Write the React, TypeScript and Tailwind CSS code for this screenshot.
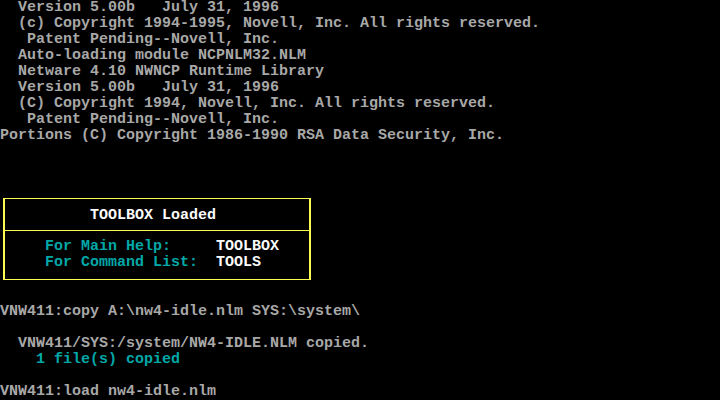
import React from "react";

const gray = "text-[#a8a8a8]";
const cyan = "text-[#00a8a8]";
const white = "text-[#fcfcfc]";

function Line({ text, color = gray }: { text: string; color?: string }) {
  return <div className={`h-[16px] whitespace-pre ${color}`}>{text || " "}</div>;
}

export default function App() {
  const top = [
    "  Version 5.00b   July 31, 1996",
    "  (c) Copyright 1994-1995, Novell, Inc. All rights reserved.",
    "   Patent Pending--Novell, Inc.",
    "  Auto-loading module NCPNLM32.NLM",
    "  Netware 4.10 NWNCP Runtime Library",
    "  Version 5.00b   July 31, 1996",
    "  (C) Copyright 1994, Novell, Inc. All rights reserved.",
    "   Patent Pending--Novell, Inc.",
    "Portions (C) Copyright 1986-1990 RSA Data Security, Inc.",
    "",
    "",
    "",
  ];
  return (
    <div
      className="w-[720px] h-[400px] overflow-hidden bg-black font-bold text-[15px] leading-[16px]"
      style={{ fontFamily: '"Liberation Mono", monospace' }}
    >
      {top.map((t, i) => (
        <Line key={i} text={t} />
      ))}
      <div className="h-[96px] pt-[6px]">
        <div className="ml-[3px] w-[308px] h-[82px] border-x-2 border-y border-[#fcfc54] flex flex-col">
          <div className="h-[32px] pt-[9px] pl-[85px] border-b border-[#fcfc54]">
            <Line text="TOOLBOX Loaded" color={white} />
          </div>
          <div className="pt-[8px] pl-[40px]">
            <div className="h-[16px] whitespace-pre">
              <span className={cyan}>For Main Help:     </span>
              <span className={white}>TOOLBOX</span>
            </div>
            <div className="h-[16px] whitespace-pre">
              <span className={cyan}>For Command List:  </span>
              <span className={white}>TOOLS</span>
            </div>
          </div>
        </div>
      </div>
      <Line text="" />
      <Line text="VNW411:copy A:\nw4-idle.nlm SYS:\system\" />
      <Line text="" />
      <Line text="  VNW411/SYS:/system/NW4-IDLE.NLM copied." />
      <Line text="    1 file(s) copied" color={cyan} />
      <Line text="" />
      <Line text="VNW411:load nw4-idle.nlm" />
    </div>
  );
}
